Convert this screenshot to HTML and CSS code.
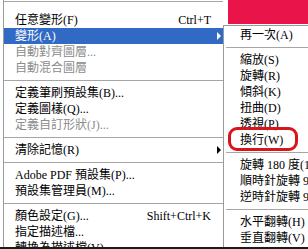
FILE: index.html
```html
<!DOCTYPE html>
<html>
<head>
<meta charset="utf-8">
<link rel="stylesheet" href="styles.css">
</head>
<body>
<div class="screen">
  <div class="menu">
    <div class="sep sep-top"></div>
    <div class="item"><span class="label">任意變形(F)</span><span class="key">Ctrl+T</span><span class="arrow-col"></span></div>
    <div class="item active"><span class="label">變形(A)</span><span class="arrow-col"><i class="arrow"></i></span></div>
    <div class="item disabled"><span class="label">自動對齊圖層...</span><span class="arrow-col"></span></div>
    <div class="item disabled"><span class="label">自動混合圖層</span><span class="arrow-col"></span></div>
    <div class="sep"></div>
    <div class="item"><span class="label">定義筆刷預設集(B)...</span><span class="arrow-col"></span></div>
    <div class="item"><span class="label">定義圖樣(Q)...</span><span class="arrow-col"></span></div>
    <div class="item disabled"><span class="label">定義自訂形狀(J)...</span><span class="arrow-col"></span></div>
    <div class="sep"></div>
    <div class="item"><span class="label">清除記憶(R)</span><span class="arrow-col"><i class="arrow"></i></span></div>
    <div class="sep"></div>
    <div class="item"><span class="label">Adobe PDF 預設集(P)...</span><span class="arrow-col"></span></div>
    <div class="item"><span class="label">預設集管理員(M)...</span><span class="arrow-col"></span></div>
    <div class="sep"></div>
    <div class="item"><span class="label">顏色設定(G)...</span><span class="key">Shift+Ctrl+K</span><span class="arrow-col"></span></div>
    <div class="item"><span class="label">指定描述檔...</span><span class="arrow-col"></span></div>
    <div class="item"><span class="label">轉換為描述檔(V)...</span><span class="arrow-col"></span></div>
  </div>

  <div class="red-block"></div>

  <div class="submenu">
    <div class="item"><span class="label">再一次(A)</span></div>
    <div class="sep"></div>
    <div class="item"><span class="label">縮放(S)</span></div>
    <div class="item"><span class="label">旋轉(R)</span></div>
    <div class="item"><span class="label">傾斜(K)</span></div>
    <div class="item"><span class="label">扭曲(D)</span></div>
    <div class="item"><span class="label">透視(P)</span></div>
    <div class="item"><span class="label">換行(W)</span></div>
    <div class="sep"></div>
    <div class="item"><span class="label">旋轉 180 度(1)</span></div>
    <div class="item"><span class="label">順時針旋轉 90 度(9)</span></div>
    <div class="item"><span class="label">逆時針旋轉 90 度(0)</span></div>
    <div class="sep"></div>
    <div class="item"><span class="label">水平翻轉(H)</span></div>
    <div class="item"><span class="label">垂直翻轉(V)</span></div>
  </div>

  <div class="oval"></div>
</div>
</body>
</html>
```

FILE: styles.css
```css
html, body {
  margin: 0;
  padding: 0;
  background: #ffffff;
}

.screen {
  position: relative;
  width: 308px;
  height: 249px;
  overflow: hidden;
  box-sizing: border-box;
  border-bottom: 2px solid #1a1a1a;
  background: #ffffff;
  font-family: "Liberation Serif", "Noto Sans CJK TC", serif;
  font-size: 12px;
  color: #000000;
}

.menu {
  margin-left: 3px;
  width: 219px;
  border-left: 1px solid #9a9a9a;
  background: #ffffff;
}

.item {
  display: flex;
  align-items: center;
  height: 16px;
  line-height: 16px;
  white-space: nowrap;
}

.menu .item {
  padding-left: 11px;
}

.item .label {
  flex: 1;
}

.item .key {
  flex: none;
}

.arrow-col {
  flex: none;
  width: 12px;
  height: 16px;
  display: flex;
  align-items: center;
}

.arrow {
  display: block;
  margin-left: 6px;
  width: 0;
  height: 0;
  border-left: 4px solid #000000;
  border-top: 4px solid transparent;
  border-bottom: 4px solid transparent;
}

.item.active {
  background: #316ac5;
  color: #ffffff;
}

.item.active .arrow {
  border-left-color: #ffffff;
}

.item.disabled {
  color: #8c8c8c;
}

.sep {
  padding: 4px 0;
}

.sep::before {
  content: "";
  display: block;
  height: 1px;
  background: #a6a6a6;
}

.sep.sep-top {
  padding: 1px 0 10px;
}

.red-block {
  position: absolute;
  left: 228px;
  top: 0;
  width: 80px;
  height: 24px;
  background: #e8144a;
}

.submenu {
  position: absolute;
  left: 223px;
  top: 25px;
  width: 120px;
  height: 240px;
  padding-top: 1px;
  border-left: 1px solid #9a9a9a;
  border-top: 1px solid #9a9a9a;
  background: #ffffff;
}

.submenu .item {
  padding-left: 16px;
}

.submenu .sep {
  margin-left: 2px;
}

.oval {
  position: absolute;
  left: 228px;
  top: 127px;
  width: 64px;
  height: 18px;
  border: 3px solid #d8141c;
  border-radius: 9px;
}
```
